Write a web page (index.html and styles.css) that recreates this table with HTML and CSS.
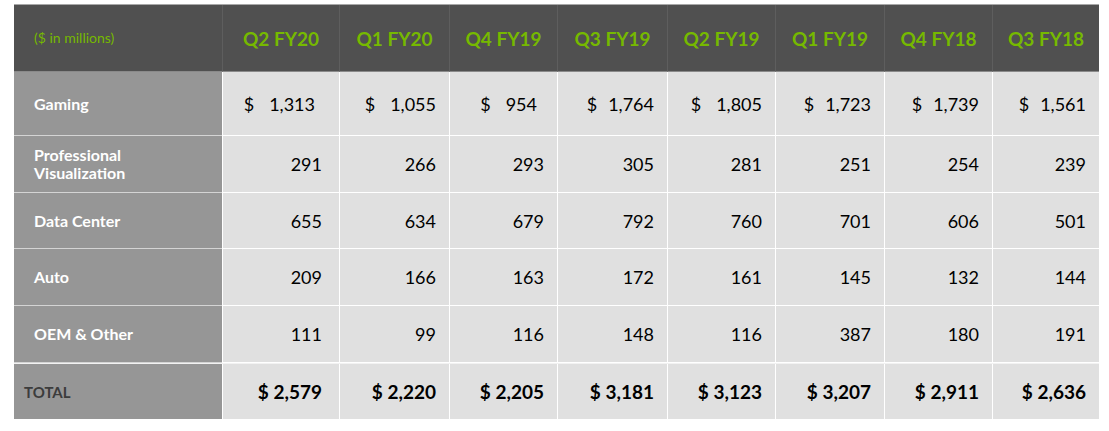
FILE: index.html
```html
<!DOCTYPE html>
<html>
<head>
<meta charset="utf-8">
<link rel="stylesheet" href="styles.css">
</head>
<body>
<div class="table">
  <div class="row head">
    <div class="cell label units">($ in millions)</div>
    <div class="cell q">Q2 FY20</div>
    <div class="cell q">Q1 FY20</div>
    <div class="cell q">Q4 FY19</div>
    <div class="cell q">Q3 FY19</div>
    <div class="cell q">Q2 FY19</div>
    <div class="cell q">Q1 FY19</div>
    <div class="cell q">Q4 FY18</div>
    <div class="cell q">Q3 FY18</div>
  </div>
  <div class="row r-gaming">
    <div class="cell label">Gaming</div>
    <div class="cell num money"><span class="dol">$</span><span class="gap-w"></span>1,313</div>
    <div class="cell num money"><span class="dol">$</span><span class="gap-w"></span>1,055</div>
    <div class="cell num money"><span class="dol">$</span><span class="gap-w"></span>954</div>
    <div class="cell num money"><span class="dol">$</span><span class="gap-n"></span>1,764</div>
    <div class="cell num money"><span class="dol">$</span><span class="gap-w"></span>1,805</div>
    <div class="cell num money"><span class="dol">$</span><span class="gap-n"></span>1,723</div>
    <div class="cell num money"><span class="dol">$</span><span class="gap-n"></span>1,739</div>
    <div class="cell num money"><span class="dol">$</span><span class="gap-n"></span>1,561</div>
  </div>
  <div class="row r-mid">
    <div class="cell label">Professional<br>Visualization</div>
    <div class="cell num">291</div>
    <div class="cell num">266</div>
    <div class="cell num">293</div>
    <div class="cell num">305</div>
    <div class="cell num">281</div>
    <div class="cell num">251</div>
    <div class="cell num">254</div>
    <div class="cell num">239</div>
  </div>
  <div class="row r-mid r-dc">
    <div class="cell label">Data Center</div>
    <div class="cell num">655</div>
    <div class="cell num">634</div>
    <div class="cell num">679</div>
    <div class="cell num">792</div>
    <div class="cell num">760</div>
    <div class="cell num">701</div>
    <div class="cell num">606</div>
    <div class="cell num">501</div>
  </div>
  <div class="row r-mid">
    <div class="cell label">Auto</div>
    <div class="cell num">209</div>
    <div class="cell num">166</div>
    <div class="cell num">163</div>
    <div class="cell num">172</div>
    <div class="cell num">161</div>
    <div class="cell num">145</div>
    <div class="cell num">132</div>
    <div class="cell num">144</div>
  </div>
  <div class="row r-mid">
    <div class="cell label">OEM &amp; Other</div>
    <div class="cell num">111</div>
    <div class="cell num">99</div>
    <div class="cell num">116</div>
    <div class="cell num">148</div>
    <div class="cell num">116</div>
    <div class="cell num">387</div>
    <div class="cell num">180</div>
    <div class="cell num">191</div>
  </div>
  <div class="row total">
    <div class="cell label">TOTAL</div>
    <div class="cell num">$ 2,579</div>
    <div class="cell num">$ 2,220</div>
    <div class="cell num">$ 2,205</div>
    <div class="cell num">$ 3,181</div>
    <div class="cell num">$ 3,123</div>
    <div class="cell num">$ 3,207</div>
    <div class="cell num">$ 2,911</div>
    <div class="cell num">$ 2,636</div>
  </div>
</div>
</body>
</html>
```

FILE: styles.css
```css
html, body {
  margin: 0;
  padding: 0;
  background: #ffffff;
}

body {
  font-family: "Lato", "DejaVu Sans", sans-serif;
  padding: 4px 0 0 14px;
}

.table {
  width: 1085px;
  display: flex;
  flex-direction: column;
  border-top: 1px solid #a8a8a8;
}

.row {
  display: grid;
  grid-template-columns: 208px 117px 110px 108px 110px 108px 109px 108px 107px;
}

.cell {
  display: flex;
  align-items: center;
  border-left: 1px solid #ffffff;
  border-bottom: 1px solid #ffffff;
  background: #e0e0e0;
  color: #000000;
  font-size: 18px;
  box-sizing: border-box;
}

.cell:first-child {
  border-left: none;
}

.label {
  background: #969696;
  color: #ffffff;
  font-weight: bold;
  font-size: 16px;
  line-height: 18px;
  padding-left: 20px;
  border-bottom-color: #d4d4d4;
}

.head {
  height: 67px;
}

.head .cell {
  background: #505050;
  border-left-color: #5e5e5e;
  border-bottom: 1px solid #8a8a8a;
}

.head .units {
  color: #76b900;
  font-weight: normal;
  font-size: 14px;
  padding-left: 20px;
}

.head .q {
  justify-content: center;
  color: #76b900;
  font-weight: bold;
  font-size: 19px;
}

.r-gaming {
  height: 64px;
}

.r-mid {
  height: 57px;
}

.r-dc {
  height: 56px;
}

.num {
  justify-content: flex-end;
  padding-right: 13px;
}

.row .num:nth-child(2) {
  padding-right: 17px;
}

.money {
  justify-content: flex-end;
}

.gap-w {
  display: inline-block;
  width: 15px;
}

.gap-n {
  display: inline-block;
  width: 11px;
}

.r-gaming .num:nth-child(2) {
  padding-right: 24px;
}

.r-gaming .num:nth-child(4) {
  padding-right: 20px;
}

.total {
  height: 55px;
  border-top: 1px solid #f2f2f2;
}

.total .cell {
  border-bottom: none;
  font-weight: bold;
  font-size: 19px;
}

.total .label {
  color: #3c3c3c;
  font-size: 15px;
  padding-left: 10px;
}
```
